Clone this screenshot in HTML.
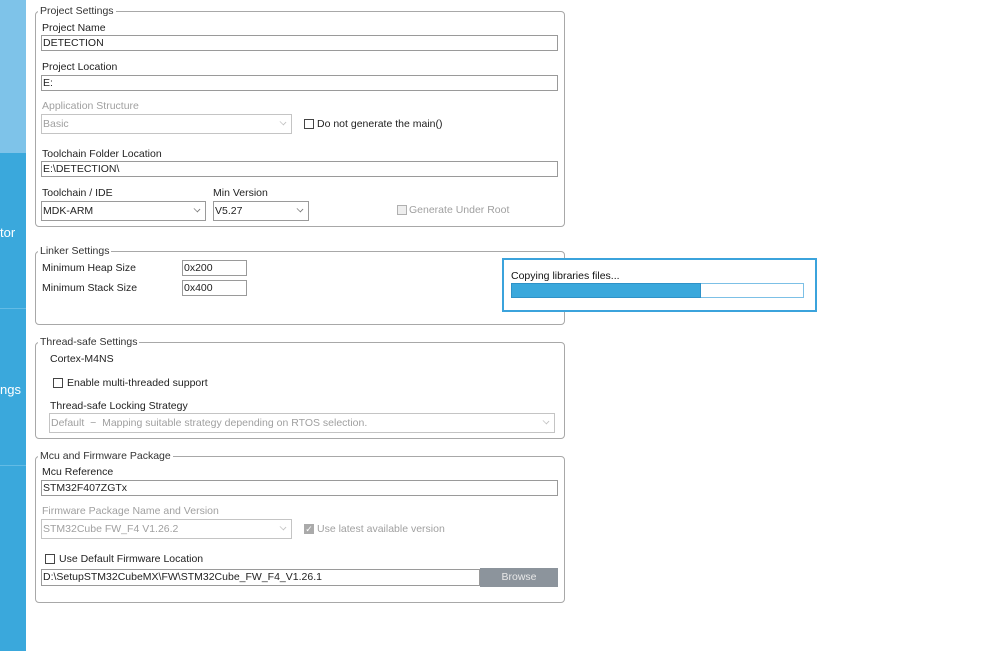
<!DOCTYPE html>
<html><head><meta charset="utf-8"><style>
*{margin:0;padding:0;box-sizing:border-box}
body{width:999px;height:651px;background:#fff;position:relative;overflow:hidden;font-family:"Liberation Sans",Arial,sans-serif;font-size:10.5px;color:#222}
div,span{position:absolute}
.side{left:0;width:26px}
.box{border:1px solid #a8a8a8;border-radius:4px}
.lg{background:#fff;padding:0 2px;line-height:12px;color:#333}
.t{line-height:12px;white-space:nowrap}
.g{color:#a0a0a0}
.in{border:1px solid #9a9a9a;background:#fff;line-height:15px;padding-left:1px;white-space:nowrap}
.sel{border:1px solid #9a9a9a;background:#fff;line-height:18px;padding-left:1px;white-space:nowrap}
.sel.d{border-color:#c4c4c4;color:#a0a0a0}
.ar{position:absolute;right:5px;top:4px;width:6px;height:6px;border-right:1px solid #777;border-bottom:1px solid #777;transform:rotate(45deg) scale(.9,.7)}
.d .ar{border-color:#c0c0c0}
.cb{width:10px;height:10px;border:1px solid #444;background:#fff}
</style></head><body>
<div class="side" style="top:0;height:153px;background:#7ec3e9"></div>
<div class="side" style="top:153px;height:498px;background:#3aa8dc"></div>
<div class="side" style="top:308px;height:1px;background:#63bbe5"></div>
<div class="side" style="top:465px;height:1px;background:#63bbe5"></div>
<div class="t" style="left:0;top:226px;color:#fff;font-size:13px;line-height:14px">tor</div>
<div class="t" style="left:0;top:383px;color:#fff;font-size:13px;line-height:14px">ngs</div>

<!-- Project Settings -->
<div class="box" style="left:35px;top:11px;width:530px;height:216px"></div>
<div class="lg" style="left:38px;top:5px">Project Settings</div>
<div class="t" style="left:42px;top:22px">Project Name</div>
<div class="in" style="left:41px;top:35px;width:517px;height:16px">DETECTION</div>
<div class="t" style="left:42px;top:61px">Project Location</div>
<div class="in" style="left:41px;top:75px;width:517px;height:16px">E:</div>
<div class="t g" style="left:42px;top:100px">Application Structure</div>
<div class="sel d" style="left:41px;top:114px;width:251px;height:20px">Basic<i class="ar"></i></div>
<div class="cb" style="left:304px;top:119px"></div>
<div class="t" style="left:317px;top:118px">Do not generate the main()</div>
<div class="t" style="left:42px;top:148px">Toolchain Folder Location</div>
<div class="in" style="left:41px;top:161px;width:517px;height:16px">E:\DETECTION\</div>
<div class="t" style="left:42px;top:187px">Toolchain / IDE</div>
<div class="sel" style="left:41px;top:201px;width:165px;height:20px">MDK-ARM<i class="ar"></i></div>
<div class="t" style="left:213px;top:187px">Min Version</div>
<div class="sel" style="left:213px;top:201px;width:96px;height:20px">V5.27<i class="ar"></i></div>
<div class="cb" style="left:397px;top:205px;border-color:#b0b0b0;background:#eee"></div>
<div class="t g" style="left:409px;top:204px">Generate Under Root</div>

<!-- Linker -->
<div class="box" style="left:35px;top:251px;width:530px;height:74px"></div>
<div class="lg" style="left:38px;top:245px">Linker Settings</div>
<div class="t" style="left:42px;top:262px">Minimum Heap Size</div>
<div class="in" style="left:182px;top:260px;width:65px;height:16px">0x200</div>
<div class="t" style="left:42px;top:282px">Minimum Stack Size</div>
<div class="in" style="left:182px;top:280px;width:65px;height:16px">0x400</div>

<!-- progress -->
<div style="left:502px;top:258px;width:315px;height:54px;border:2px solid #3ba3dc;background:#fff"></div>
<div class="t" style="left:511px;top:270px;color:#111">Copying libraries files...</div>
<div style="left:511px;top:283px;width:293px;height:15px;border:1px solid #7cc0e6;background:#fff"></div>
<div style="left:511px;top:283px;width:190px;height:15px;background:#3aa8dc;border:1px solid #2e92c8"></div>

<!-- Thread-safe -->
<div class="box" style="left:35px;top:342px;width:530px;height:97px"></div>
<div class="lg" style="left:38px;top:336px">Thread-safe Settings</div>
<div class="t" style="left:50px;top:353px">Cortex-M4NS</div>
<div class="cb" style="left:53px;top:378px"></div>
<div class="t" style="left:67px;top:377px">Enable multi-threaded support</div>
<div class="t" style="left:50px;top:400px">Thread-safe Locking Strategy</div>
<div class="sel d" style="left:49px;top:413px;width:506px;height:20px">Default &nbsp;−&nbsp; Mapping suitable strategy depending on RTOS selection.<i class="ar"></i></div>

<!-- Mcu -->
<div class="box" style="left:35px;top:456px;width:530px;height:147px"></div>
<div class="lg" style="left:38px;top:450px">Mcu and Firmware Package</div>
<div class="t" style="left:42px;top:466px">Mcu Reference</div>
<div class="in" style="left:41px;top:480px;width:517px;height:16px">STM32F407ZGTx</div>
<div class="t g" style="left:42px;top:505px">Firmware Package Name and Version</div>
<div class="sel d" style="left:41px;top:519px;width:251px;height:20px">STM32Cube FW_F4 V1.26.2<i class="ar"></i></div>
<div class="cb" style="left:304px;top:524px;border-color:#aaa;background:#aaa;color:#fff;font-size:9px;line-height:8px;text-align:center">✓</div>
<div class="t g" style="left:317px;top:523px">Use latest available version</div>
<div class="cb" style="left:45px;top:554px"></div>
<div class="t" style="left:59px;top:553px">Use Default Firmware Location</div>
<div class="in" style="left:41px;top:569px;width:439px;height:17px;line-height:15px">D:\SetupSTM32CubeMX\FW\STM32Cube_FW_F4_V1.26.1</div>
<div style="left:480px;top:568px;width:78px;height:19px;background:#8c949c;color:#e8e8e8;text-align:center;line-height:19px">Browse</div>
</body></html>
